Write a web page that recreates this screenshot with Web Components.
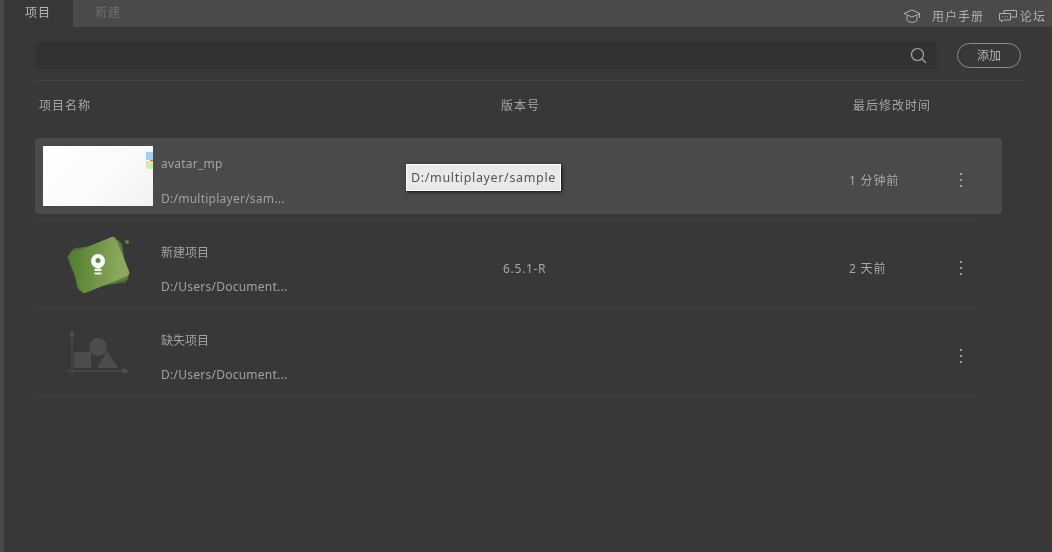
<!DOCTYPE html>
<html lang="zh">
<head>
<meta charset="utf-8">
<title>项目</title>
<style>
html, body { margin: 0; height: 100%; background: #383838; overflow: hidden; }
body { font: 12px "Noto Sans", "Noto Sans CJK SC", sans-serif; color: #aaa; }
</style>
</head>
<body>
<hub-app></hub-app>
<script>
class HubTabs extends HTMLElement {
    constructor() {
        super();
        this.attachShadow({ mode: "open" });
        this.shadowRoot.innerHTML = `
            <style>
            :host { display: flex; height: 27px; background: #4a4a4a; align-items: stretch; }
            .tab { width: 69px; box-sizing: border-box; padding: 5px 0 0 21px; letter-spacing: 1px; line-height: 16px; color: #666; }
            .tab.on { background: #383838; color: #b4b4b4; }
            .tab.next { padding-left: 22px; color: #6e6e6e; }
            .links { margin-left: auto; display: flex; align-items: center; padding: 5px 6px 0 0; color: #b0b0b0; letter-spacing: 1px; }
            svg { display: block; fill: none; stroke: #b0b0b0; }
            .cap { margin-right: 11px; }
            .chat { margin: 0 3px 0 14px; }
            </style>
            <div class="tab on">项目</div>
            <div class="tab next">新建</div>
            <div class="links">
                <svg class="cap" width="18" height="15" viewBox="0 0 18 15"><path d="M1 4.500 9 1l8 3.500-8 3.500z"/><path d="M4 6.500v4.500c1 3 9 3 10 0v-4.500"/><path d="M16.500 5v4"/></svg>
                <span>用户手册</span>
                <svg class="chat" width="19" height="14" viewBox="0 0 19 14"><path d="M1.500 4.500h11v6.500h-7l-2 2v-2h-2z"/><path d="M6 4.500V1.500h12.500v6.500h-6"/><path d="M4 7.800h1M6.500 7.800h1M9 7.800h1"/></svg>
                <span>论坛</span>
            </div>
        `;
    }
}

class HubSearch extends HTMLElement {
    constructor() {
        super();
        this.attachShadow({ mode: "open" });
        this.shadowRoot.innerHTML = `
            <style>
            :host { display: flex; align-items: center; height: 27px; margin-top: 15px; }
            .bar { width: 902px; height: 27px; background: #323232; display: flex; align-items: center; justify-content: flex-end; padding-right: 10px; box-sizing: border-box; }
            svg { display: block; fill: none; stroke: #a8a8a8; stroke-width: 1.200; }
            button { margin-left: 20px; width: 64px; height: 25px; box-sizing: border-box; background: none; border: 1px solid #8c8c8c; border-radius: 13px; color: #b4b4b4; font: inherit; padding: 0 0 2px; }
            </style>
            <div class="bar">
                <svg width="17" height="17" viewBox="0 0 17 17"><circle cx="7.500" cy="7.500" r="6"/><path d="m12 12 4 4"/></svg>
            </div>
            <button>添加</button>
        `;
    }
}

class HubHeader extends HTMLElement {
    constructor() {
        super();
        this.attachShadow({ mode: "open" });
        this.shadowRoot.innerHTML = `
            <style>
            :host { display: grid; grid-template-columns: 462px 352px 1fr; height: 48px; margin: 11px 29px 0 -1px; border-top: 1px solid #414141; padding-left: 5px; align-items: center; letter-spacing: 1px; color: #a6a6a6; }
            </style>
            <div>项目名称</div>
            <div>版本号</div>
            <div>最后修改时间</div>
        `;
    }
}

class HubRow extends HTMLElement {
    constructor() {
        super();
        this.attachShadow({ mode: "open" });
        this.shadowRoot.innerHTML = `
            <style>
            :host { display: block; width: 941px; height: 88px; box-sizing: border-box; border-bottom: 1px solid #414141; padding-top: 5px; }
            .card { width: 967px; height: 76px; box-sizing: border-box; display: grid; grid-template-columns: 118px 342px 346px 112px 1fr; padding-left: 8px; border-radius: 3px; position: relative; }
            :host([active]) .card { background: #4a4a4a; }
            .thumb { width: 110px; height: 60px; margin-top: 8px; }
            .name { margin-top: 17px; line-height: 18px; height: 18px; color: #a2a2a2; letter-spacing: .22px; }
            .path { margin-top: 17px; line-height: 18px; color: #a0a0a0; white-space: nowrap; letter-spacing: .25px; }
            :host([plain]) .name { margin-top: 18px; letter-spacing: 0; }
            :host([plain]) .path { margin-top: 16px; }
            .ver, .time { margin-top: 34px; line-height: 18px; color: #a8a8a8; letter-spacing: .7px; }
            .time { letter-spacing: .8px; }
            .dots { margin-top: 35px; width: 2px; display: grid; gap: 4px; grid-auto-rows: 2px; margin-left: -1px; }
            .dots i { background: #a0a0a0; }
            </style>
            <div class="card">
                <div class="thumb"><slot name="thumb"></slot></div>
                <div>
                    <div class="name"><slot name="name"></slot></div>
                    <div class="path"><slot name="path"></slot></div>
                </div>
                <div class="ver"><slot name="version"></slot></div>
                <div class="time"><slot name="time"></slot></div>
                <div class="dots"><i></i><i></i><i></i></div>
                <slot name="over"></slot>
            </div>
        `;
    }
}

class HubTip extends HTMLElement {
    constructor() {
        super();
        this.attachShadow({ mode: "open" });
        this.shadowRoot.innerHTML = `
            <style>
            :host { position: absolute; left: 371px; top: 26px; display: block; height: 27px; width: 155px; box-sizing: border-box; background: #e9e9e9; border: 1px solid #fff; box-shadow: 1px 1px 3px #111; color: #555; line-height: 25px; padding-left: 4px; letter-spacing: .65px; font-size: 12.500px; white-space: nowrap; }
            </style>
            <slot></slot>
        `;
    }
}

class HubApp extends HTMLElement {
    constructor() {
        super();
        this.attachShadow({ mode: "open" });
        this.shadowRoot.innerHTML = `
            <style>
            :host { display: block; height: 552px; border-left: 4px solid #4a4a4a; box-sizing: border-box; background: #383838; }
            .wrap { will-change: transform; }
            main { padding-left: 31px; }
            .list { margin-top: 4px; }
            svg { display: block; }
            .blank { width: 110px; height: 60px; background: linear-gradient(135deg, #fff 0%, #fafafb 55%, #f1f2f5 100%); position: relative; overflow: hidden; }
            .blank i { position: absolute; right: 0; width: 7px; }
            .blank .b { top: 6px; height: 8px; background: #a3d0f8; border-radius: 1px 0 0 0; }
            .blank .r { top: 14px; height: 1px; width: 3px; background: #f0566a; }
            .blank .g { top: 15px; height: 8px; background: #cdf0a4; border-radius: 0 0 0 3px; }
            </style>
            <div class="wrap">
            <hub-tabs></hub-tabs>
            <main>
                <hub-search></hub-search>
                <hub-header></hub-header>
                <div class="list">
                    <hub-row active>
                        <div slot="thumb" class="blank"><i class="b"></i><i class="r"></i><i class="g"></i></div>
                        <span slot="name">avatar_mp</span>
                        <span slot="path">D:/multiplayer/sam...</span>
                        <span slot="time">1 分钟前</span>
                        <hub-tip slot="over">D:/multiplayer/sample</hub-tip>
                    </hub-row>
                    <hub-row plain>
                        <svg slot="thumb" width="110" height="60" viewBox="0 0 110 60">
                            <defs><linearGradient id="lg" x1="0" y1="0" x2="1" y2=".4"><stop offset="0" stop-color="#4f7a2c"/><stop offset="1" stop-color="#8aa95e"/></linearGradient></defs>
                            <rect x="31" y="11" width="51" height="41" rx="4" fill="#4f6a3a" transform="rotate(-8 56 31)"/>
                            <rect x="30" y="11" width="52" height="41" rx="4" fill="#5a7f3a" transform="rotate(-14 56 31)"/>
                            <rect x="29.500" y="10" width="52" height="42" rx="4" fill="url(#lg)" transform="rotate(-22 55.500 31)"/>
                            <circle cx="84" cy="8" r="2" fill="#5c8a38"/>
                            <circle cx="55" cy="27" r="7" fill="#fff"/>
                            <circle cx="55" cy="26.500" r="2.500" fill="#5e8a3a"/>
                            <rect x="52.500" y="31" width="5" height="3.500" fill="#fff"/>
                            <rect x="51.500" y="35" width="7" height="2" fill="#eef3e8"/>
                            <rect x="51.500" y="38.500" width="7" height="2" fill="#eef3e8"/>
                        </svg>
                        <span slot="name">新建项目</span>
                        <span slot="path">D:/Users/Document...</span>
                        <span slot="version">6.5.1-R</span>
                        <span slot="time">2 天前</span>
                    </hub-row>
                    <hub-row plain>
                        <svg slot="thumb" width="110" height="60" viewBox="0 0 110 60">
                            <path d="M29 12v41M24 49h56" stroke="#484848" stroke-width="1.500" fill="none"/>
                            <path d="M26 14.500 29 8l3 6.500zM80 46l6 3-6 3z" fill="#505050"/>
                            <rect x="31" y="30" width="17" height="16" fill="#4c4c4c"/>
                            <circle cx="55" cy="25" r="9" fill="#4c4c4c"/>
                            <path d="M64 29 75 46H54z" fill="#4c4c4c"/>
                        </svg>
                        <span slot="name">缺失项目</span>
                        <span slot="path">D:/Users/Document...</span>
                    </hub-row>
                </div>
            </main>
            </div>
        `;
    }
}

customElements.define("hub-tabs", HubTabs);
customElements.define("hub-search", HubSearch);
customElements.define("hub-header", HubHeader);
customElements.define("hub-row", HubRow);
customElements.define("hub-tip", HubTip);
customElements.define("hub-app", HubApp);
</script>
</body>
</html>
